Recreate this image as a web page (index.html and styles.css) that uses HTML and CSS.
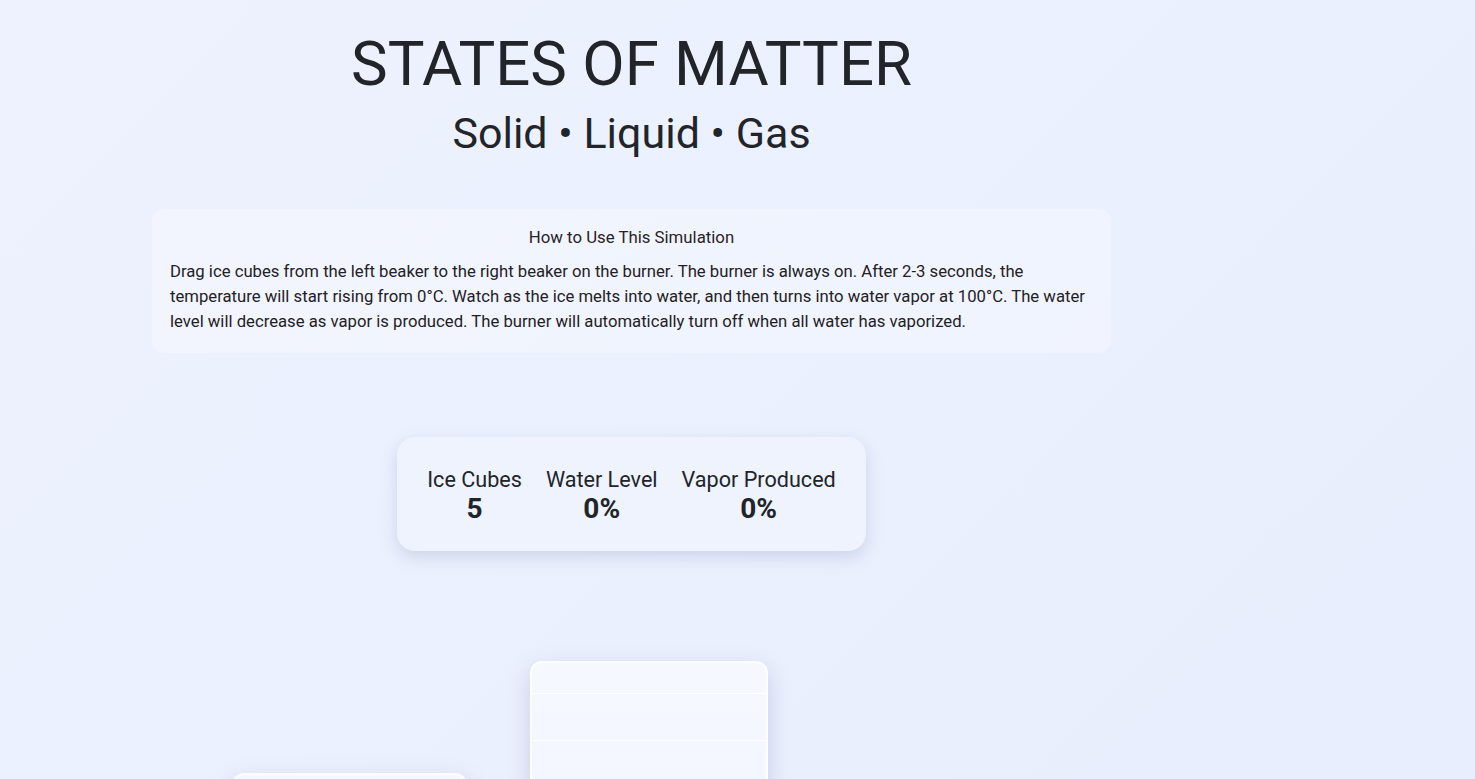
FILE: index.html
```html
<!DOCTYPE html>
<html lang="en">
<head>
<meta charset="utf-8">
<title>States of Matter</title>
<link rel="stylesheet" href="styles.css">
</head>
<body>
<div class="app">
  <main class="main">
    <header class="hero">
      <h1 class="title">STATES OF MATTER</h1>
      <h2 class="subtitle">Solid • Liquid • Gas</h2>
    </header>

    <section class="howto">
      <h3 class="howto-title">How to Use This Simulation</h3>
      <p class="howto-text">Drag ice cubes from the left beaker to the right beaker on the burner. The burner is always on. After 2-3 seconds, the temperature will start rising from 0°C. Watch as the ice melts into water, and then turns into water vapor at 100°C. The water level will decrease as vapor is produced. The burner will automatically turn off when all water has vaporized.</p>
    </section>

    <div class="stats-wrap">
      <div class="stats">
        <div class="stat">
          <span class="stat-label">Ice Cubes</span>
          <span class="stat-value">5</span>
        </div>
        <div class="stat">
          <span class="stat-label">Water Level</span>
          <span class="stat-value">0%</span>
        </div>
        <div class="stat">
          <span class="stat-label">Vapor Produced</span>
          <span class="stat-value">0%</span>
        </div>
      </div>
    </div>

    <div class="lab">
      <div class="beaker beaker-ice">
        <div class="mark"></div>
        <div class="mark"></div>
      </div>
      <div class="beaker beaker-heat">
        <div class="mark"></div>
        <div class="mark"></div>
        <div class="mark"></div>
      </div>
    </div>
  </main>
</div>
</body>
</html>
```

FILE: styles.css
```css
* {
  box-sizing: border-box;
}

html, body {
  margin: 0;
  padding: 0;
}

body {
  min-height: 100vh;
  font-family: Roboto, "Liberation Sans", Arial, sans-serif;
  color: #212529;
  background: linear-gradient(135deg, #eef2fe 0%, #ebf0fe 50%, #e7edfd 100%);
  overflow: hidden;
}

.app {
  display: flex;
  padding-left: 152px;
}

.main {
  width: 959px;
  display: flex;
  flex-direction: column;
}

/* heading */
.hero {
  text-align: center;
  padding-top: 27px;
}

.title {
  margin: 0;
  font-size: 61.7px;
  line-height: 1.2;
  font-weight: 400;
}

.subtitle {
  margin: 7px 0 0;
  font-size: 43px;
  line-height: 1.2;
  font-weight: 400;
}

/* instructions card */
.howto {
  margin-top: 49px;
  padding: 17px 18px 19px;
  border-radius: 12px;
  background: rgba(255, 255, 255, 0.28);
}

.howto-title {
  margin: 0;
  text-align: center;
  font-size: 16.8px;
  line-height: 22.5px;
  font-weight: 400;
  color: #2a2326;
}

.howto-text {
  margin: 11px 0 0;
  font-size: 16.7px;
  line-height: 25px;
  color: #1f2125;
}

/* counters */
.stats-wrap {
  display: flex;
  justify-content: center;
  margin-top: 84px;
}

.stats {
  display: flex;
  gap: 24px;
  padding: 30px 30px 26px;
  border-radius: 18px;
  background: #eff3fe;
  box-shadow: 0 6px 16px rgba(120, 130, 170, 0.25);
}

.stat {
  display: flex;
  flex-direction: column;
  align-items: center;
}

.stat-label {
  font-size: 21.6px;
  line-height: 26px;
}

.stat-value {
  font-size: 28px;
  font-weight: 700;
  line-height: 32px;
}

/* beakers */
.lab {
  display: flex;
  align-items: flex-end;
  gap: 63px;
  padding-left: 80px;
  margin-top: 110px;
}

.beaker {
  display: flex;
  flex-direction: column;
  border: 2px solid rgba(255, 255, 255, 0.85);
  border-bottom: none;
  border-radius: 12px 12px 16px 16px;
  background: linear-gradient(180deg, rgba(246, 248, 255, 0.95) 0%, rgba(240, 243, 254, 0.95) 100%);
  box-shadow: 0 8px 22px rgba(110, 120, 170, 0.28);
}

.beaker-ice {
  width: 235px;
  height: 200px;
}

.beaker-heat {
  width: 238px;
  height: 312px;
}

.mark {
  height: 1px;
  margin-top: 30px;
  background: rgba(255, 255, 255, 0.9);
}

.mark + .mark {
  margin-top: 46px;
}
```
